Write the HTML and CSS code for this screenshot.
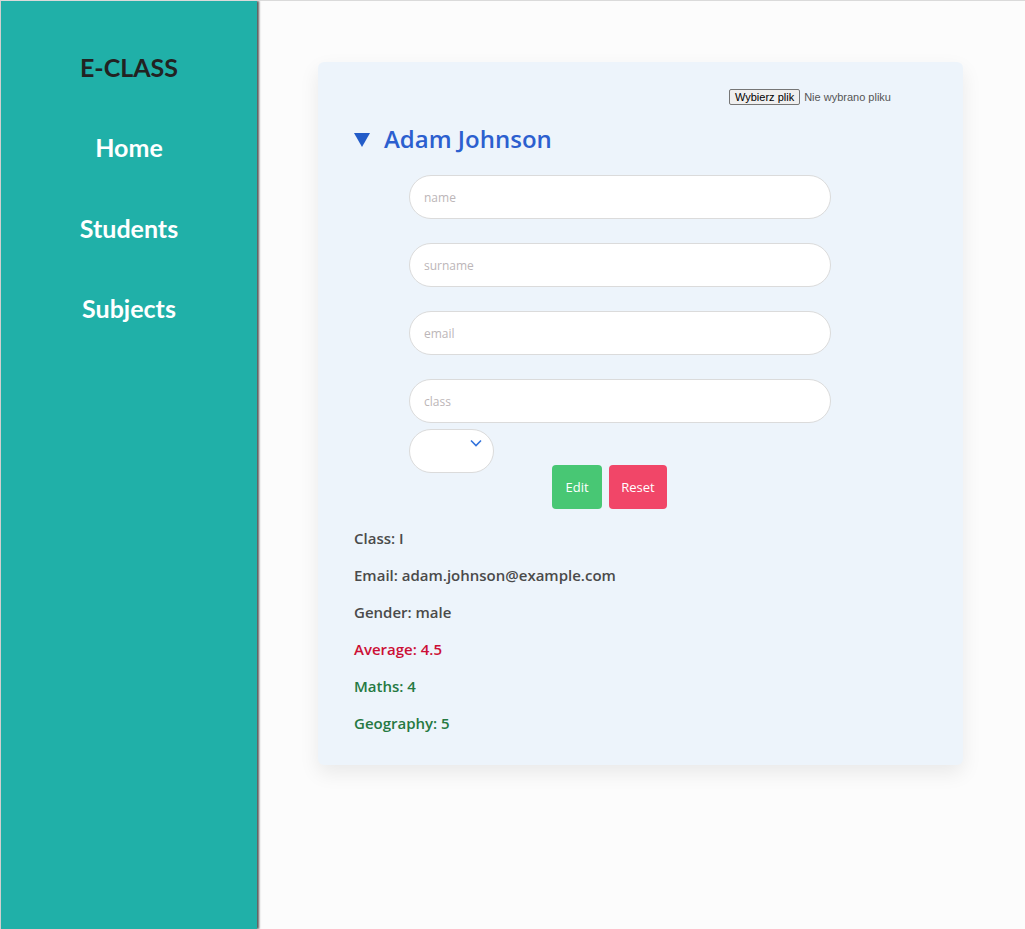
FILE: index.html
```html
<!DOCTYPE html>
<html lang="en">
<head>
<meta charset="utf-8">
<title>E-CLASS</title>
<link rel="stylesheet" href="styles.css">
</head>
<body>
<aside class="sidebar">
  <div class="brand">E-CLASS</div>
  <nav class="nav">
    <a class="nav-link">Home</a>
    <a class="nav-link">Students</a>
    <a class="nav-link">Subjects</a>
  </nav>
</aside>
<main class="main">
  <section class="card">
    <div class="file-row">
      <span class="file-btn">Wybierz plik</span>
      <span class="file-text">Nie wybrano pliku</span>
    </div>
    <h2 class="student-name"><svg class="marker" width="16" height="14" viewBox="0 0 16 14"><polygon points="0,0 16,0 8,14" fill="#235cc8"/></svg>Adam Johnson</h2>
    <form class="form">
      <div class="field"><input class="input" placeholder="name"></div>
      <div class="field"><input class="input" placeholder="surname"></div>
      <div class="field"><input class="input" placeholder="email"></div>
      <div class="field last"><input class="input" placeholder="class"></div>
      <div class="select">
        <svg class="chevron" width="12" height="8" viewBox="0 0 12 8"><path d="M1 1.5 L6 6.5 L11 1.5" fill="none" stroke="#3273dc" stroke-width="1.6"/></svg>
      </div>
      <div class="buttons">
        <span class="btn btn-edit">Edit</span>
        <span class="btn btn-reset">Reset</span>
      </div>
    </form>
    <div class="info">
      <p class="info-line">Class: I</p>
      <p class="info-line">Email: adam.johnson@example.com</p>
      <p class="info-line">Gender: male</p>
      <p class="info-line danger">Average: 4.5</p>
      <p class="info-line success">Maths: 4</p>
      <p class="info-line success">Geography: 5</p>
    </div>
  </section>
</main>
</body>
</html>
```

FILE: styles.css
```css
* { box-sizing: border-box; }
html, body { margin: 0; padding: 0; }
body {
  display: flex;
  height: 929px;
  background: #fcfcfc;
  border-top: 1px solid #dadada;
  border-left: 1px solid #cfcfcf;
  font-family: "Open Sans", "Lato", sans-serif;
  overflow: hidden;
}
.sidebar {
  width: 256px;
  flex: none;
  background: #20b0a8;
  box-shadow: 2px 0 2px rgba(0,0,0,0.65);
  display: flex;
  flex-direction: column;
  align-items: center;
  padding-top: 51px;
  position: relative;
  z-index: 1;
  font-family: "Lato", sans-serif;
}
.brand {
  font-size: 25px;
  font-weight: 700;
  color: #222;
  line-height: 30px;
}
.nav {
  display: flex;
  flex-direction: column;
  align-items: center;
  gap: 50.5px;
  margin-top: 50px;
}
.nav-link {
  color: #fff;
  font-size: 25px;
  font-weight: 700;
  line-height: 30px;
}
.main {
  flex: 1;
  padding: 61px 0 0 61px;
}
.card {
  width: 645px;
  background: #edf4fb;
  border-radius: 6px;
  box-shadow: 0 8px 20px rgba(0,0,0,0.08);
  padding: 27px 36px 32px;
}
.file-row {
  display: flex;
  justify-content: flex-end;
  align-items: center;
  padding-right: 36px;
  font-family: "Liberation Sans", Arial, sans-serif;
  font-size: 11px;
}
.file-btn {
  border: 1px solid #767676;
  background: #efefef;
  border-radius: 2px;
  padding: 1px 5px;
  color: #000;
  line-height: 12px;
}
.file-text {
  margin-left: 4px;
  color: #555;
}
.student-name {
  margin: 17px 0 0;
  font-size: 24px;
  font-weight: 600;
  color: #2c5fcf;
  line-height: 34px;
  display: flex;
  align-items: center;
}
.marker {
  margin-right: 14px;
  margin-top: 1px;
}
.form {
  margin: 19px 0 0 55px;
  width: 422px;
}
.field { margin-bottom: 24px; }
.field.last { margin-bottom: 6px; }
.input {
  display: block;
  width: 422px;
  height: 44px;
  border: 1px solid #dbdbdb;
  border-radius: 22px;
  background: #fff;
  padding: 0 14px;
  font-family: inherit;
  font-size: 12px;
  outline: none;
}
.input::placeholder { color: #bcb6b8; }
.select {
  width: 85px;
  height: 44px;
  border: 1px solid #dbdbdb;
  border-radius: 22px;
  background: #fff;
  position: relative;
}
.chevron {
  position: absolute;
  left: 60px;
  top: 9px;
}
.buttons {
  display: flex;
  gap: 7px;
  margin: -8px 0 0 143px;
}
.btn {
  height: 44px;
  display: flex;
  align-items: center;
  justify-content: center;
  border-radius: 4px;
  color: #fff;
  font-size: 13px;
}
.btn-edit { width: 50px; background: #48c774; }
.btn-reset { width: 58px; background: #f14668; }
.info { margin-top: 19px; }
.info-line {
  margin: 0 0 17px;
  font-size: 15px;
  font-weight: 600;
  color: #4a4a4a;
  line-height: 20px;
}
.info-line:last-child { margin-bottom: 0; }
.danger { color: #cc0f35; }
.success { color: #257942; }
```
